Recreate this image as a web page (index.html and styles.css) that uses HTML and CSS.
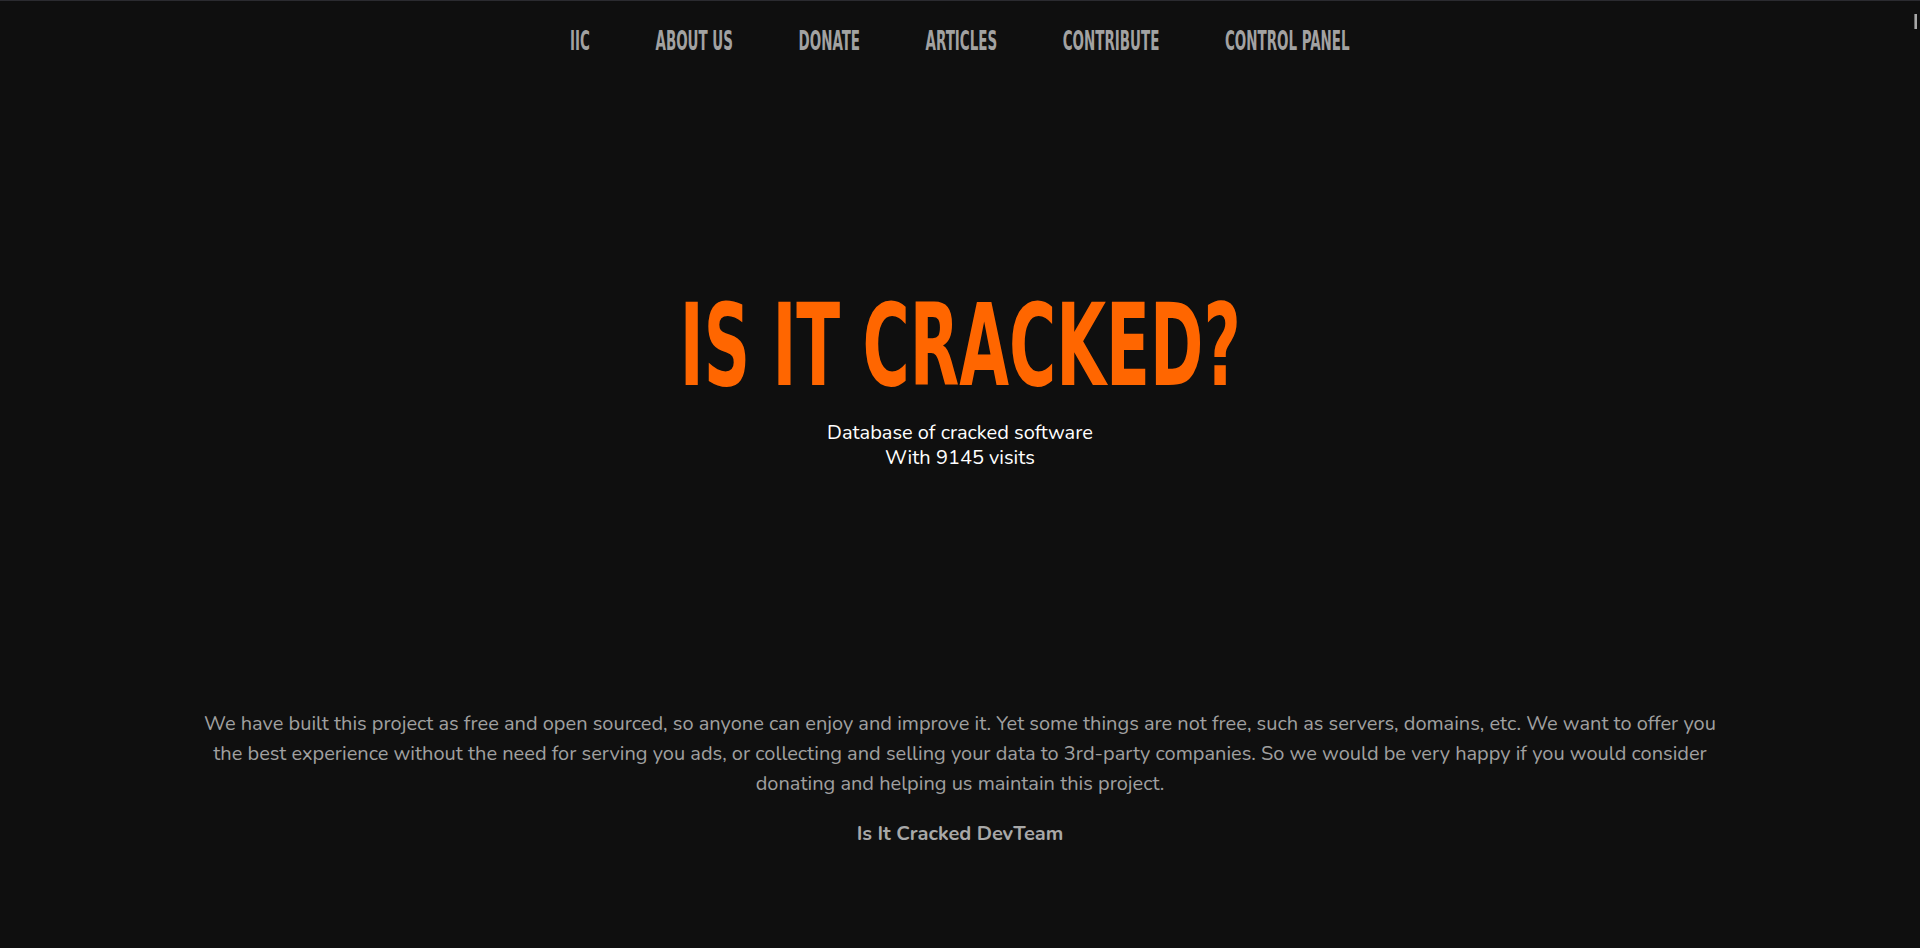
FILE: index.html
```html
<!DOCTYPE html>
<html lang="en">
<head>
<meta charset="utf-8">
<title>Is It Cracked?</title>
<link rel="stylesheet" href="styles.css">
</head>
<body>
  <span class="scroll-mark" aria-hidden="true"></span>
  <nav class="nav">
    <ul class="nav-list">
      <li><a href="#">IIC</a></li>
      <li><a href="#">About us</a></li>
      <li><a href="#">Donate</a></li>
      <li><a href="#">Articles</a></li>
      <li><a href="#">Contribute</a></li>
      <li><a href="#">Control panel</a></li>
    </ul>
  </nav>
  <header class="hero">
    <h1 class="hero-title">Is it cracked?</h1>
    <p class="hero-sub">Database of cracked software<br>With 9145 visits</p>
  </header>
  <section class="about">
    <p class="about-text">We have built this project as free and open sourced, so anyone can enjoy and improve it. Yet some things are not free, such as servers, domains, etc. We want to offer you the best experience without the need for serving you ads, or collecting and selling your data to 3rd-party companies. So we would be very happy if you would consider donating and helping us maintain this project.</p>
    <p class="about-sign">Is It Cracked DevTeam</p>
  </section>
</body>
</html>
```

FILE: styles.css
```css
html, body {
  margin: 0;
  padding: 0;
}
body {
  position: relative;
  background: #0f0f0f;
  border-top: 1px solid #2b2b30;
  min-height: 947px;
  font-family: "Nunito", "Lato", "Open Sans", sans-serif;
  overflow: hidden;
}
.scroll-mark {
  position: absolute;
  top: 13px;
  right: 3px;
  width: 2px;
  height: 15px;
  background: #a8a8a8;
  border-left: 1px solid #6a6a6a;
}
.nav {
  padding-top: 27px;
  display: flex;
  justify-content: center;
}
.nav-list {
  list-style: none;
  margin: 0;
  padding: 0;
  display: flex;
  gap: 114px;
  transform: scaleX(0.575);
}
.nav-list a {
  display: block;
  font-family: "DejaVu Sans Condensed", "DejaVu Sans", sans-serif;
  font-stretch: condensed;
  font-weight: bold;
  font-size: 26px;
  line-height: 1;
  color: #a2a2a2;
  text-decoration: none;
  text-transform: uppercase;
  white-space: nowrap;
}
.hero {
  margin-top: 235px;
  display: flex;
  flex-direction: column;
  align-items: center;
}
.hero-title {
  margin: 0;
  font-family: "DejaVu Sans Condensed", "DejaVu Sans", sans-serif;
  font-stretch: condensed;
  font-weight: bold;
  font-size: 114px;
  line-height: 1;
  color: #ff6600;
  text-transform: uppercase;
  white-space: nowrap;
  transform: scaleX(0.627);
}
.hero-sub {
  margin: 17px 0 0;
  color: #ffffff;
  font-size: 20px;
  line-height: 25px;
  text-align: center;
}
.about {
  width: 80%;
  margin: 239px auto 0;
  text-align: center;
  color: #a0a0a0;
  font-size: 20px;
  line-height: 30px;
}
.about-text {
  margin: 0;
}
.about-sign {
  margin: 20px 0 0;
  font-weight: bold;
  color: #a8a8a8;
}
```
